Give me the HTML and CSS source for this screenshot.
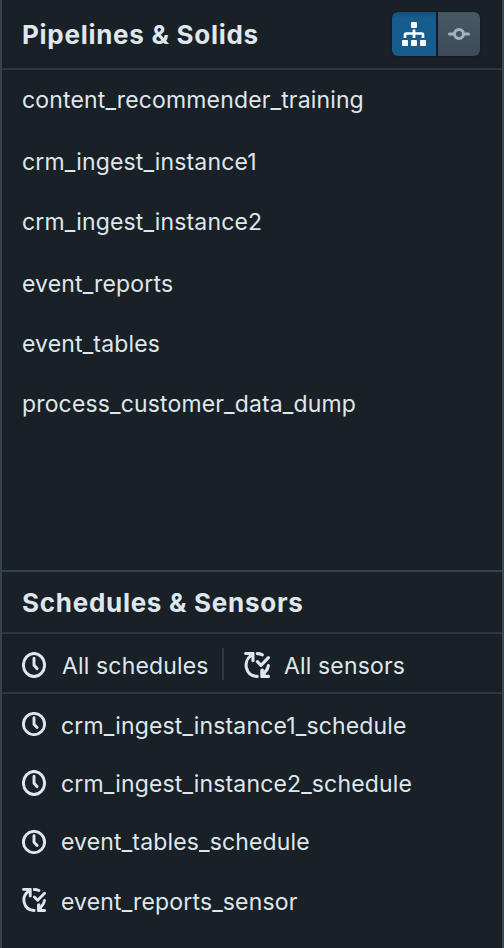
FILE: index.html
```
<!DOCTYPE html>
<html lang="en">
<head>
<meta charset="utf-8">
<title>Pipelines &amp; Solids</title>
<link rel="stylesheet" href="styles.css">
</head>
<body>
<svg class="defs" aria-hidden="true">
  <symbol id="clock" viewBox="0 0 24 24" preserveAspectRatio="none">
    <circle cx="12" cy="12" r="10.6" fill="none" stroke="currentColor" stroke-width="2.9"/>
    <path d="M12 5.8V12.2L15.1 15.4" fill="none" stroke="currentColor" stroke-width="2.9" stroke-linecap="round" stroke-linejoin="round"/>
  </symbol>
  <symbol id="sensor" viewBox="0 0 26 26">
    <g fill="none" stroke="currentColor" stroke-width="3.1" stroke-linecap="round">
      <path d="M6.8 3.8C-1.2 9.5 1.2 24.2 13.2 24.4"/>
      <path d="M13.3 1.6Q16.1 1.6 18.4 2.8"/>
      <path d="M13.4 9.7L17 13.3L24.4 5.7" stroke-linejoin="round"/>
      <path d="M24.4 13.5Q24.1 17 20.8 20.3"/>
    </g>
    <path d="M1 0H9.5Q10.5 0 10.5 1V9.5Q8.8 10.8 7.4 9.5V5L4.5 3H1Q-.8 1.5 1 0Z" fill="currentColor"/>
    <path d="M17 17Q18.5 15.8 19.8 17V20.2L22 22.8H25Q27 24.5 25 26H17.5Q16.3 26 16.3 25V18Z" fill="currentColor"/>
  </symbol>
</svg>
<main class="panel">
  <section class="pipelines">
    <header class="header">
      <h2 class="title title-pipelines">Pipelines &amp; Solids</h2>
      <div class="toggle">
        <button class="toggle-button active" aria-label="Pipelines">
          <svg width="24" height="24" viewBox="0 0 24 24" fill="currentColor">
            <rect x="9" width="6" height="6" rx="1"/>
            <rect y="18" width="6" height="6" rx="1"/>
            <rect x="9" y="18" width="6" height="6" rx="1"/>
            <rect x="18" y="18" width="6" height="6" rx="1"/>
            <path d="M12 7.5V16M3 16V12.7Q3 11.5 4.2 11.5H19.8Q21 11.5 21 12.7V16" fill="none" stroke="currentColor" stroke-width="2.7"/>
          </svg>
        </button>
        <button class="toggle-button" aria-label="Solids">
          <svg width="22" height="14" viewBox="0 0 22 14" fill="none" stroke="currentColor" stroke-width="3">
            <circle cx="11" cy="7" r="4.5"/>
            <path d="M1.5 7H6.2M15.8 7H20.5" stroke-linecap="round"/>
          </svg>
        </button>
      </div>
    </header>
    <ul class="pipeline-list">
      <li>content_recommender_training</li>
      <li class="tall">crm_ingest_instance1</li>
      <li>crm_ingest_instance2</li>
      <li class="tall">event_reports</li>
      <li>event_tables</li>
      <li>process_customer_data_dump</li>
    </ul>
  </section>
  <section class="automation">
    <header class="header header-small"><h2 class="title title-schedules">Schedules &amp; Sensors</h2></header>
    <nav class="filters">
      <a class="item all-schedules"><svg class="icon clock-tall"><use href="#clock"/></svg><span>All schedules</span></a>
      <span class="divider"></span>
      <a class="item all-sensors"><svg class="icon sensor-large"><use href="#sensor"/></svg><span>All sensors</span></a>
    </nav>
    <ul class="job-list">
      <li class="item"><svg class="icon raised"><use href="#clock"/></svg><span>crm_ingest_instance1_schedule</span></li>
      <li class="item"><svg class="icon clock-tall"><use href="#clock"/></svg><span>crm_ingest_instance2_schedule</span></li>
      <li class="item"><svg class="icon"><use href="#clock"/></svg><span>event_tables_schedule</span></li>
      <li class="item last"><svg class="icon raised"><use href="#sensor"/></svg><span>event_reports_sensor</span></li>
    </ul>
  </section>
</main>
</body>
</html>
```
FILE: styles.css
```
* { box-sizing: border-box; }
body {
  margin: 0;
  background: #192026;
  color: #dfe7ee;
  font: 400 23px/30px Inter, "Liberation Sans", sans-serif;
  letter-spacing: .15px;
}
.defs { position: absolute; width: 0; height: 0; }
.panel {
  height: 948px;
  overflow: hidden;
  border-left: 2px solid #3a4047;
  border-right: 2px solid #394b59;
}
.pipelines { height: 570px; }
.header {
  display: flex;
  align-items: center;
  justify-content: space-between;
  height: 70px;
  padding: 0 22px 0 20px;
  border-bottom: 2px solid #2c3742;
}
.header-small { height: 62px; }
.title {
  margin: 0;
  padding-top: 2px;
  font-size: 26px;
  font-weight: 700;
  line-height: 32px;
  letter-spacing: .72px;
  white-space: nowrap;
}
.toggle { display: flex; gap: 2px; border-radius: 6px; background: #151b21; box-shadow: 0 0 0 1px #161c22; }
.toggle-button {
  display: flex;
  align-items: center;
  justify-content: center;
  width: 42px;
  height: 44px;
  padding: 0;
  border: 0;
  border-radius: 0 6px 6px 0;
  background: linear-gradient(#485865, #3c4b58);
  color: #a3b3c0;
}
.toggle-button.active {
  width: 44px;
  border-radius: 6px 0 0 6px;
  background: linear-gradient(#13507b, #155d8d 6px);
  color: #fff;
}
ul { margin: 0; padding: 0; list-style: none; }
.pipeline-list li { display: flex; align-items: center; height: 60px; padding-left: 20px; }
.pipeline-list li.tall { height: 62px; padding-top: 2px; }
.automation { border-top: 2px solid #304150; }
.filters { display: flex; align-items: center; height: 60px; padding-left: 20px; padding-top: 2px; border-bottom: 2px solid #2c3742; }
.filters .item span { padding-top: 4px; }
.filters .icon { margin-top: 2px; }
.item { display: flex; align-items: center; gap: 16px; white-space: nowrap; }
.icon { flex: none; width: 24px; height: 24px; overflow: visible; }
.icon.clock-tall { height: 26px; }
.icon.sensor-large { width: 26px; height: 26px; }
.icon.raised { margin-bottom: 4px; }
.job-list .clock-tall { margin-bottom: 2px; }
.all-schedules { width: 200px; }
.all-sensors { gap: 14px; margin-left: 20px; }
.divider { width: 2px; height: 32px; background: #2d3b48; }
.job-list { padding-top: 3px; }
.job-list .item { height: 58px; padding-left: 20px; }
.job-list .item span { margin-left: -1px; }
.job-list .last { height: 60px; padding-top: 2px; }
```
